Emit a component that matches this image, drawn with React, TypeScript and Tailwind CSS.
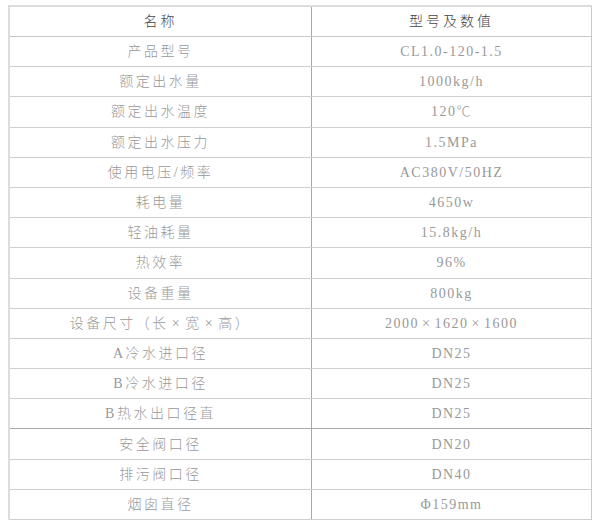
import React from 'react';

const rows: [string, string][] = [
  ['产品型号', 'CL1.0-120-1.5'],
  ['额定出水量', '1000kg/h'],
  ['额定出水温度', '120℃'],
  ['额定出水压力', '1.5MPa'],
  ['使用电压/频率', 'AC380V/50HZ'],
  ['耗电量', '4650w'],
  ['轻油耗量', '15.8kg/h'],
  ['热效率', '96%'],
  ['设备重量', '800kg'],
  ['设备尺寸（长×宽×高）', '2000×1620×1600'],
  ['A冷水进口径', 'DN25'],
  ['B冷水进口径', 'DN25'],
  ['B热水出口径直', 'DN25'],
  ['安全阀口径', 'DN20'],
  ['排污阀口径', 'DN40'],
  ['烟囱直径', 'Φ159mm'],
];

const font = { fontFamily: '"Liberation Serif", "Noto Sans CJK SC", serif' };

// render the multiplication sign as a wide glyph, like the original
function Cell({ text }: { text: string }) {
  const parts = text.split('×');
  return (
    <>
      {parts.map((p, i) => (
        <React.Fragment key={i}>
          {i > 0 ? <span className="px-[3px]">×</span> : null}
          {p}
        </React.Fragment>
      ))}
    </>
  );
}

export default function App() {
  return (
    <div className="w-[600px] h-[529px] bg-white pt-[5px] pl-[8px]">
      <div
        className="w-[584px] border-l-2 border-t-2 border-l-[#dcdcdc] border-t-[#dcdcdc] border-r border-r-[#c8c8c8] font-light"
        style={font}
      >
        <div className="flex h-[30px] border-b border-[#c8c8c8] text-[14px] text-[#444]">
          <div className="w-[302px] flex items-center justify-center tracking-[3px] border-r border-[#a8a8a8]">
            名称
          </div>
          <div className="flex-1 flex items-center justify-center tracking-[3px]">型号及数值</div>
        </div>
        {rows.map(([name, value], i) => (
          <div
            key={i}
            className={`flex h-[30.2px] border-b text-[14px] text-[#999] ${
              i === 12 ? 'border-[#a8a8a8]' : 'border-[#cfcfcf]'
            }`}
          >
            <div className="w-[302px] flex items-center justify-center tracking-[2.5px] border-r border-[#a8a8a8]">
              <Cell text={name} />
            </div>
            <div className="flex-1 flex items-center justify-center tracking-[1.5px]">
              <Cell text={value} />
            </div>
          </div>
        ))}
      </div>
    </div>
  );
}
